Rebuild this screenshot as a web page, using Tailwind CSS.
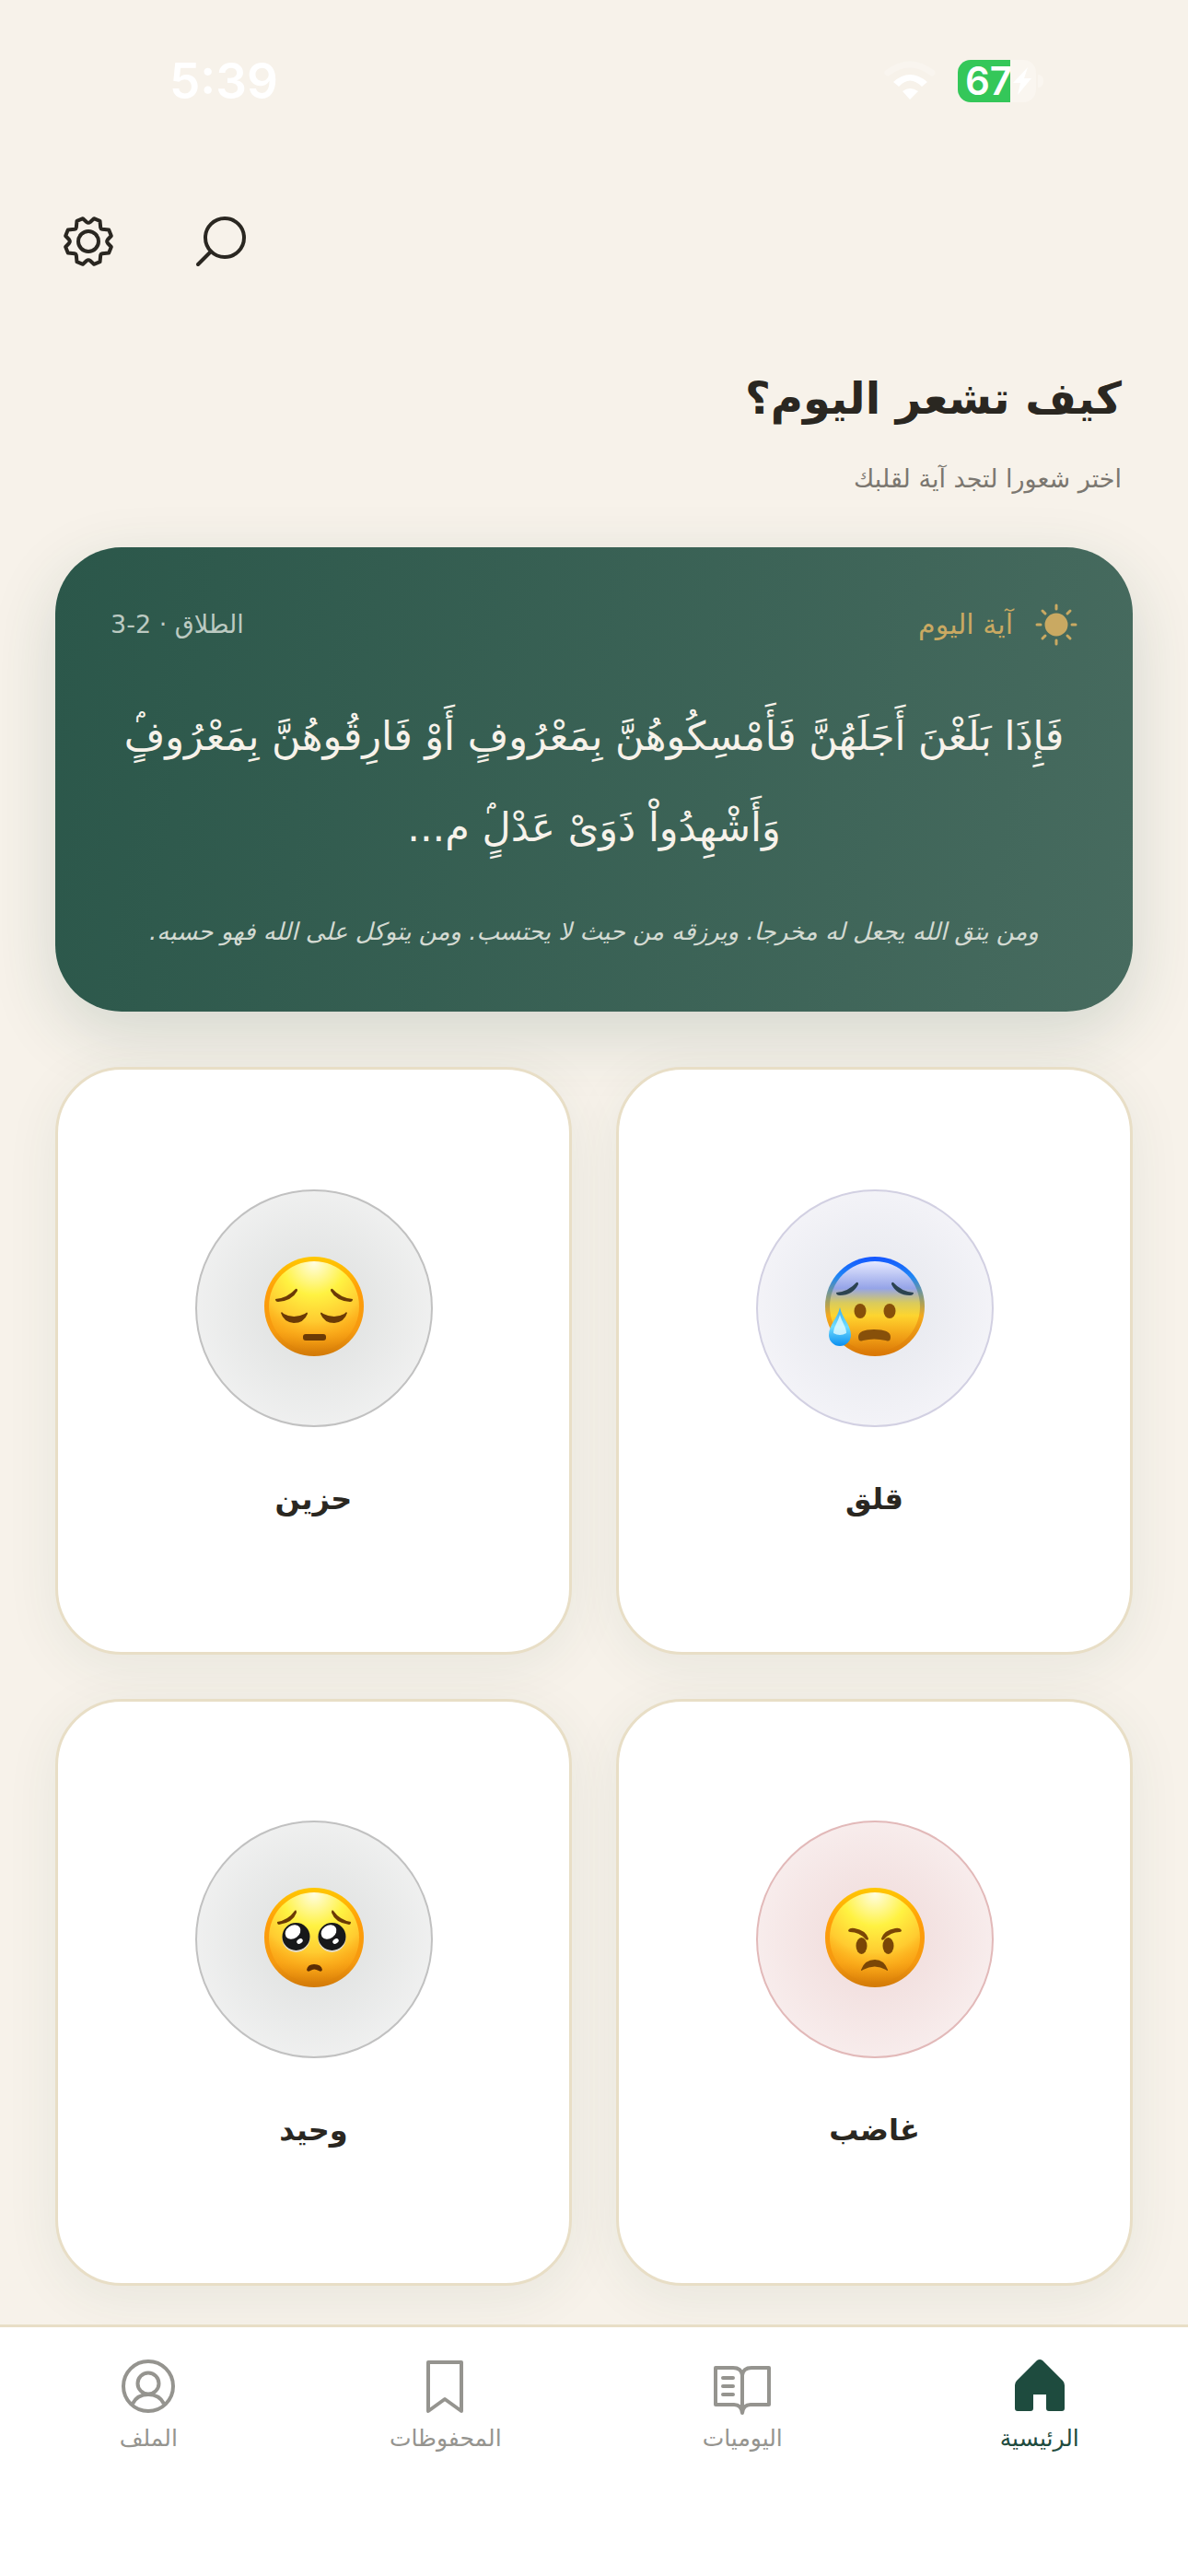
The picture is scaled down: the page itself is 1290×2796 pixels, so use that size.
<!DOCTYPE html>
<html lang="ar" dir="rtl">

<head>
  <meta charset="UTF-8">
  <meta name="viewport" content="width=device-width, initial-scale=1.0">
  <title>كيف تشعر اليوم؟</title>
  <script src="https://cdn.jsdelivr.net/npm/@tailwindcss/browser@4"></script>
</head>

<body class="min-h-screen flex flex-col bg-[#f7f2ea] text-[#2a2721] font-['DejaVu_Sans',sans-serif]">

  <!-- Status bar -->
  <div dir="ltr" class="flex items-center justify-between h-[176px] pl-[184px] pr-[157px] text-white font-['Inter',sans-serif]">
    <span class="text-[53px] leading-[60px] font-semibold">5:39</span>
    <div class="flex items-center gap-6">
      <svg class="w-[56px] h-[44px]" viewBox="0 0 56 44" fill="none">
        <path d="M4 13Q28-5 52 13" stroke="#f9f5ef" stroke-width="7" stroke-linecap="round" />
        <path d="M10 23Q28 7 47 23L41 28Q28 15 16 28Z" fill="#fff" />
        <path d="M20 33Q28 27 37 33L28 42Z" fill="#fff" />
      </svg>
      <div class="flex items-center gap-0.5">
        <div class="flex items-center h-[46px] w-[85px] pl-2 rounded-[14px] bg-linear-[90deg,#34c759_57px,#faf6f0_57px] text-[42px] leading-[46px] font-semibold">
          67
          <svg class="w-[22px] h-[32px] shrink-0" viewBox="0 0 22 32" fill="currentColor">
            <path d="M17 1L1 18H9L6 31L21 13H13Z" />
          </svg>
        </div>
        <div class="w-[6px] h-[14px] rounded-r-full bg-[#faf6f0]"></div>
      </div>
    </div>
  </div>

  <!-- Toolbar -->
  <header dir="ltr" class="flex gap-[86px] px-[68px] pt-[58px]">
    <button type="button" aria-label="الإعدادات" class="cursor-pointer">
      <svg class="size-14" viewBox="-28 -28 56 56" fill="none" stroke="currentColor" stroke-width="4" stroke-linejoin="round">
        <path d="M-2 -21Q0 -19.4 2 -21L6 -24.8L12.5 -22.2L13.2 -15Q13.5 -13.5 15 -13.2L22.2 -12.5L24.8 -6L21 -2Q19.4 0 21 2L24.8 6L22.2 12.5L15 13.2Q13.5 13.5 13.2 15L12.5 22.2L6 24.8L2 21Q0 19.4 -2 21L-6 24.8L-12.5 22.2L-13.2 15Q-13.5 13.5 -15 13.2L-22.2 12.5L-24.8 6L-21 2Q-19.4 0 -21 -2L-24.8 -6L-22.2 -12.5L-15 -13.2Q-13.5 -13.5 -13.2 -15L-12.5 -22.2L-6 -24.8Z" />
        <circle r="11" />
      </svg>
    </button>
    <button type="button" aria-label="بحث" class="cursor-pointer">
      <svg class="size-14 overflow-visible" viewBox="0 0 56 56" fill="none" stroke="currentColor" stroke-width="4" stroke-linecap="round">
        <circle cx="34" cy="24" r="21" />
        <path d="M19 39L5 53" />
      </svg>
    </button>
  </header>

  <main class="flex-1 px-[60px]">
    <div class="px-3 pt-[96px]">
      <h1 class="text-[48px] leading-[92px] font-bold">كيف تشعر اليوم؟</h1>
      <p class="text-[27px] leading-[60px] mt-3 text-[#7b7770]">اختر شعورا لتجد آية لقلبك</p>
    </div>

    <!-- Verse of the day -->
    <section class="mt-11 p-[60px] rounded-[72px] bg-linear-[100deg,#2b574a,#476b5f] shadow-[0_24px_72px_rgba(30,75,62,0.16)]">
      <div class="flex items-center justify-between text-[27px] leading-[48px]">
        <h2 class="flex items-center gap-6 text-[30px] text-[#c9a962]">
          <svg class="size-[46px]" viewBox="-23 -23 46 46" fill="currentColor" stroke="currentColor" stroke-width="3" stroke-linecap="round">
            <circle r="11" />
            <path d="M0-17V-21M0 17V21M-17 0H-21M17 0H21M-12-12L-15-15M12-12L15-15M-12 12L-15 15M12 12L15 15" />
          </svg>
          آية اليوم
        </h2>
        <span class="text-[#bccac2]">الطلاق · 2-3</span>
      </div>
      <!-- the small meem is a separate mark, the font has no U+06E2 -->
      <p class="mt-12 text-center text-[43px] leading-[99px] text-[#f7f2ea]">فَإِذَا بَلَغْنَ أَجَلَهُنَّ فَأَمْسِكُوهُنَّ بِمَعْرُوفٍ أَوْ فَارِقُوهُنَّ <span class="relative">بِمَعْرُوفٍ<span class="absolute left-3 -top-4 text-[20px] leading-[28px]">م</span></span> وَأَشْهِدُواْ ذَوَىْ <span class="relative">عَدْلٍ<span class="absolute left-1 -top-4 text-[20px] leading-[28px]">م</span></span> م...</p>
      <p class="mt-9 text-center text-[26px] leading-[54px] italic text-[#d3dad2]">ومن يتق الله يجعل له مخرجا. ويرزقه من حيث لا يحتسب. ومن يتوكل على الله فهو حسبه.</p>
    </section>

    <!-- Feelings -->
    <div class="grid grid-cols-2 gap-12 mt-[60px] mb-[42px] text-[32px] leading-[60px] font-bold">
      <button type="button" class="flex flex-col items-center justify-center gap-12 pb-1.5 aspect-[22/25] bg-white border-3 border-[#e8dec6] rounded-[72px] shadow-[0_12px_60px_rgba(28,74,61,0.07)] cursor-pointer">
        <span class="flex items-center justify-center size-[258px] pb-1 rounded-full border-2 border-[#d2d0e2] bg-radial from-[#e4e6ec] to-[#f9f8fc]">
          <svg class="size-[108px]" viewBox="0 0 108 108">
            <defs>
              <linearGradient id="anxious" x2="0" y2="1">
                <stop offset="0" stop-color="#1455ff" />
                <stop offset=".2" stop-color="#1f86f5" />
                <stop offset=".46" stop-color="#a9a05a" />
                <stop offset=".6" stop-color="#f5a91c" />
                <stop offset="1" stop-color="#d97706" />
              </linearGradient>
              <linearGradient id="anxiousFace" x2="0" y2="1">
                <stop offset="0" stop-color="#e6e9ff" />
                <stop offset=".3" stop-color="#95a4e8" />
                <stop offset=".46" stop-color="#d9cb5c" />
                <stop offset=".6" stop-color="#fdd52f" />
                <stop offset="1" stop-color="#ffa414" stop-opacity="0" />
              </linearGradient>
              <linearGradient id="drop" x2="0" y2="1">
                <stop offset="0" stop-color="#38aef0" />
                <stop offset=".5" stop-color="#6fdcff" />
                <stop offset="1" stop-color="#0a8ff0" />
              </linearGradient>
              <linearGradient id="face" x2="0" y2="1">
                <stop offset="0" stop-color="#ffc800" />
                <stop offset=".35" stop-color="#ff9d0a" />
                <stop offset=".75" stop-color="#f59a10" />
                <stop offset="1" stop-color="#d27a08" />
              </linearGradient>
              <radialGradient id="faceInner" cx=".5" cy=".02" r=".98">
                <stop offset="0" stop-color="#fffde0" />
                <stop offset=".36" stop-color="#fff242" />
                <stop offset=".66" stop-color="#ffcb30" />
                <stop offset="1" stop-color="#ffa514" stop-opacity="0" />
              </radialGradient>
            </defs>
            <circle cx="54" cy="54" r="54" fill="url(#anxious)" />
            <circle cx="54" cy="54" r="49" fill="url(#anxiousFace)" />
            <g fill="#2c4350">
              <path d="M12 39Q25 38 34 28Q36 27 36 30Q30 42 16 42Q12 42 12 39Z" />
              <path d="M96 39Q83 38 74 28Q72 27 72 30Q78 42 92 42Q96 42 96 39Z" />
            </g>
            <g fill="#87500a">
              <ellipse cx="38" cy="59" rx="6.5" ry="8" />
              <ellipse cx="70" cy="59" rx="6.5" ry="8" />
              <path d="M36 87Q36 79 53 79Q71 79 71 87Q71 93 66 91Q53 88 41 91Q36 93 36 87Z" />
            </g>
            <path d="M16 55C18 66 28 74 28 85A12 12 0 0 1 4 85C4 74 14 66 16 55Z" fill="url(#drop)" />
            <path d="M16 63C18 71 23 76 23 83Q16 87 9 83C9 76 14 71 16 63Z" fill="#e4fbff" opacity=".8" />
          </svg>
        </span>
        قلق
      </button>

      <button type="button" class="flex flex-col items-center justify-center gap-12 pb-1.5 aspect-[22/25] bg-white border-3 border-[#e8dec6] rounded-[72px] shadow-[0_12px_60px_rgba(28,74,61,0.07)] cursor-pointer">
        <span class="flex items-center justify-center size-[258px] pb-1 rounded-full border-2 border-[#c1c1c1] bg-radial from-[#dcdedd] to-[#f7f7f7]">
          <svg class="size-[108px]" viewBox="0 0 108 108">
            <circle cx="54" cy="54" r="54" fill="url(#face)" />
            <circle cx="54" cy="54" r="49" fill="url(#faceInner)" />
            <g fill="#6b3a06">
              <path d="M12 46Q25 45 34 35Q36 34 36 37Q30 48 15 49Q12 49 12 46Z" />
              <path d="M96 46Q83 45 74 35Q72 34 72 37Q78 48 93 49Q96 49 96 46Z" />
              <path d="M18 61Q19 59 21 62Q32 68 44 62Q47 59 47 62Q43 72 32 72Q21 71 18 61Z" />
              <path d="M90 61Q89 59 87 62Q76 68 64 62Q61 59 61 62Q65 72 76 72Q87 71 90 61Z" />
              <rect x="42" y="84" width="25" height="7" rx="3" />
            </g>
          </svg>
        </span>
        حزين
      </button>

      <button type="button" class="flex flex-col items-center justify-center gap-12 pb-1.5 aspect-[22/25] bg-white border-3 border-[#e8dec6] rounded-[72px] shadow-[0_12px_60px_rgba(28,74,61,0.07)] cursor-pointer">
        <span class="flex items-center justify-center size-[258px] pb-1 rounded-full border-2 border-[#e2b9b9] bg-radial from-[#efd9d8] to-[#fbf4f4]">
          <svg class="size-[108px]" viewBox="0 0 108 108">
            <circle cx="54" cy="54" r="54" fill="url(#face)" />
            <circle cx="54" cy="54" r="49" fill="url(#faceInner)" />
            <g fill="#7a4606">
              <path d="M25 46Q27 43 32 44Q44 46 47 55Q47 58 44 56Q37 48 27 48Q25 48 25 46Z" />
              <path d="M83 46Q81 43 76 44Q64 46 61 55Q61 58 64 56Q71 48 81 48Q83 48 83 46Z" />
              <ellipse cx="39.5" cy="63" rx="6" ry="9" />
              <ellipse cx="68.5" cy="63" rx="6" ry="9" />
              <path d="M39 89Q43 78 54 78Q64 78 68 89Q68 91 66 89Q54 82 41 89Q39 91 39 89Z" />
            </g>
          </svg>
        </span>
        غاضب
      </button>

      <button type="button" class="flex flex-col items-center justify-center gap-12 pb-1.5 aspect-[22/25] bg-white border-3 border-[#e8dec6] rounded-[72px] shadow-[0_12px_60px_rgba(28,74,61,0.07)] cursor-pointer">
        <span class="flex items-center justify-center size-[258px] pb-1 rounded-full border-2 border-[#c1c1c1] bg-radial from-[#dcdedd] to-[#f7f7f7]">
          <svg class="size-[108px]" viewBox="0 0 108 108">
            <circle cx="54" cy="54" r="54" fill="url(#face)" />
            <circle cx="54" cy="54" r="49" fill="url(#faceInner)" />
            <g fill="#6b3a06">
              <path d="M14 37Q26 35 33 25Q35 23 35 27Q31 38 16 40Q14 40 14 37Z" />
              <path d="M94 37Q82 35 75 25Q73 23 73 27Q77 38 92 40Q94 40 94 37Z" />
            </g>
            <g fill="#e3dccb">
              <circle cx="34.5" cy="55" r="15" />
              <circle cx="73.5" cy="55" r="15" />
            </g>
            <g fill="#17181a">
              <circle cx="34.5" cy="53" r="15" />
              <circle cx="73.5" cy="53" r="15" />
            </g>
            <g fill="#fff">
              <ellipse cx="31" cy="48" rx="9" ry="7" transform="rotate(-35 31 48)" />
              <ellipse cx="70" cy="48" rx="9" ry="7" transform="rotate(-35 70 48)" />
              <ellipse cx="38.5" cy="58" rx="3.5" ry="2.5" transform="rotate(-35 38.5 58)" />
              <ellipse cx="77.5" cy="58" rx="3.5" ry="2.5" transform="rotate(-35 77.5 58)" />
            </g>
            <path d="M46 89Q47 83 54 83Q62 83 63 89Q62 92 59 90Q54 87 50 90Q47 92 46 89Z" fill="#5a2c05" />
          </svg>
        </span>
        وحيد
      </button>
    </div>
  </main>

  <!-- Tab bar -->
  <nav class="grid grid-cols-4 h-[273px] pt-8 bg-white border-t-3 border-[#e8dec6] text-[25px] leading-[42px] text-[#95948f]">
    <a href="#home" class="flex flex-col items-center gap-1 text-[#1e4b3e]">
      <svg class="size-[64px]" viewBox="0 0 64 64" fill="currentColor">
        <path d="M29 4Q32 2 35 4L57 26Q59 28 59 31V56Q59 59 56 59H42Q39 59 39 56V41H25V56Q25 59 22 59H8Q5 59 5 56V31Q5 28 7 26Z" />
      </svg>
      الرئيسية
    </a>
    <a href="#journal" class="flex flex-col items-center gap-1">
      <svg class="size-[64px]" viewBox="0 0 64 64" fill="none" stroke="currentColor" stroke-width="4" stroke-linecap="round" stroke-linejoin="round">
        <path d="M32 20Q31 12 22 12H3V52H23Q31 52 32 61Q33 52 41 52H61V12H42Q33 12 32 20ZM32 18V58M11 23H22M11 32H22M11 41H22" />
      </svg>
      اليوميات
    </a>
    <a href="#saved" class="flex flex-col items-center gap-1">
      <svg class="size-[64px]" viewBox="0 0 64 64" fill="none" stroke="currentColor" stroke-width="4" stroke-linejoin="round">
        <path d="M13 6H49V59L31 46L13 59Z" />
      </svg>
      المحفوظات
    </a>
    <a href="#profile" class="flex flex-col items-center gap-1">
      <svg class="size-[64px]" viewBox="0 0 64 64" fill="none" stroke="currentColor" stroke-width="4">
        <circle cx="32" cy="32" r="27" />
        <circle cx="32" cy="29" r="11.5" />
        <path d="M15 51Q20 41 32 41Q44 41 49 51" />
      </svg>
      الملف
    </a>
  </nav>
</body>

</html>
